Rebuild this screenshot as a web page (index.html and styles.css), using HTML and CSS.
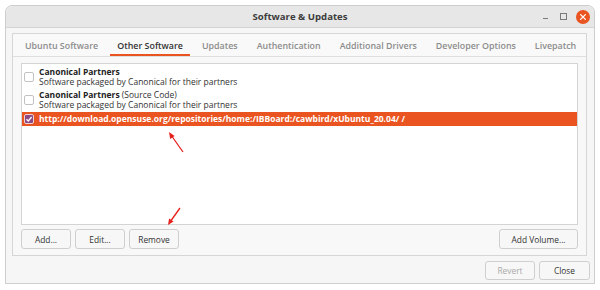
FILE: index.html
```html
<!DOCTYPE html>
<html>
<head>
<meta charset="utf-8">
<link rel="stylesheet" href="styles.css">
</head>
<body>
<div class="window">
  <div class="titlebar">
    <span></span>
    <span class="title">Software &amp; Updates</span>
    <div class="controls">
      <span class="ctl-min"></span>
      <span class="ctl-max"></span>
      <span class="ctl-close">
        <svg width="14" height="14" viewBox="0 0 14 14"><circle cx="7" cy="7" r="7" fill="#e95420"/><path d="M4.6 4.6 L9.4 9.4 M9.4 4.6 L4.6 9.4" stroke="#fff" stroke-width="1.3" stroke-linecap="round"/></svg>
      </span>
    </div>
  </div>
  <div class="body">
    <div class="notebook">
      <div class="tabs">
        <span class="tab">Ubuntu Software</span>
        <span class="tab active">Other Software</span>
        <span class="tab">Updates</span>
        <span class="tab">Authentication</span>
        <span class="tab">Additional Drivers</span>
        <span class="tab">Developer Options</span>
        <span class="tab">Livepatch</span>
      </div>
      <div class="page">
        <div class="list">
          <div class="row">
            <span class="check"></span>
            <div class="row-text">
              <div class="name"><b>Canonical Partners</b></div>
              <div class="desc">Software packaged by Canonical for their partners</div>
            </div>
          </div>
          <div class="row">
            <span class="check"></span>
            <div class="row-text">
              <div class="name"><b>Canonical Partners</b> (Source Code)</div>
              <div class="desc">Software packaged by Canonical for their partners</div>
            </div>
          </div>
          <div class="row selected">
            <span class="check checked">
              <svg width="8" height="8" viewBox="0 0 8 8"><path d="M1.5 4.2 L3.3 6 L6.6 2" fill="none" stroke="#fff" stroke-width="1.3"/></svg>
            </span>
            <div class="row-text">
              <div class="name"><b>http://download.opensuse.org/repositories/home:/IBBoard:/cawbird/xUbuntu_20.04/ /</b></div>
            </div>
          </div>
        </div>
        <div class="actions">
          <button class="btn w-add">Add...</button>
          <button class="btn w-edit">Edit...</button>
          <button class="btn w-remove">Remove</button>
          <span class="spacer"></span>
          <button class="btn w-vol">Add Volume...</button>
        </div>
      </div>
    </div>
    <div class="footer">
      <button class="btn disabled w-revert">Revert</button>
      <button class="btn w-close">Close</button>
    </div>
  </div>
</div>
<svg class="arrows" width="600" height="290" viewBox="0 0 600 290">
  <g stroke="#e5201c" stroke-width="1.3" fill="#e5201c">
    <line x1="183" y1="152" x2="171" y2="135"/>
    <path d="M169 132 L170.2 139 L174.6 135.9 Z" stroke="none"/>
    <line x1="180" y1="208" x2="170" y2="222"/>
    <path d="M168 225 L169.1 218.4 L173.5 221.6 Z" stroke="none"/>
  </g>
</svg>
</body>
</html>
```
FILE: styles.css
```css
* { box-sizing: border-box; }
html, body { margin: 0; padding: 0; background: #ffffff; }
body {
  width: 600px;
  height: 290px;
  position: relative;
  font-family: "Open Sans", "Noto Sans", sans-serif;
  color: #333;
  overflow: hidden;
}
.window {
  margin: 5px 0 0 5px;
  width: 590px;
  height: 279px;
  border: 1px solid #cdcdcd;
  border-radius: 7px 7px 0 0;
  background: #f6f6f6;
  display: flex;
  flex-direction: column;
  overflow: hidden;
}
.titlebar {
  height: 22px;
  flex: none;
  background: #e7e7e7;
  border-bottom: 1px solid #d4d4d4;
  display: grid;
  grid-template-columns: 1fr auto 1fr;
  align-items: center;
}
.title {
  font-size: 9.6px;
  font-weight: 700;
  color: #3c3c3c;
}
.controls {
  justify-self: end;
  display: flex;
  align-items: center;
  gap: 0;
  padding-right: 4px;
}
.ctl-min {
  width: 5px;
  height: 1px;
  background: #7a7a7a;
  margin-top: 4px;
  margin-right: 12px;
}
.ctl-max {
  width: 7px;
  height: 7px;
  border: 1px solid #7a7a7a;
  margin-right: 9px;
}
.ctl-close { display: flex; width: 14px; height: 14px; }
.body {
  flex: 1;
  display: flex;
  flex-direction: column;
  padding: 5px 4px 0 6px;
}
.notebook {
  height: 223px;
  margin-right: 3px;
  border: 1px solid #d6d6d6;
  background: #f8f8f8;
  display: flex;
  flex-direction: column;
}
.tabs {
  height: 23px;
  flex: none;
  display: flex;
  align-items: stretch;
  padding-left: 5px;
  gap: 5px;
  border-bottom: 1px solid #dedede;
  background: #f9f9f9;
}
.tab {
  display: flex;
  align-items: center;
  padding: 1px 7px 0;
  font-size: 8.9px;
  font-weight: 600;
  color: #8c8c8c;
  white-space: nowrap;
}
.tab.active {
  color: #333;
  box-shadow: inset 0 -2px 0 #e95420;
}
.page {
  flex: 1;
  display: flex;
  flex-direction: column;
  gap: 4px;
  padding: 6px 8px 6px 8px;
}
.list {
  flex: 1;
  background: #fff;
  border: 1px solid #d4d4d4;
  display: flex;
  flex-direction: column;
  padding-top: 1px;
}
.row {
  display: flex;
  align-items: center;
  gap: 5px;
  padding: 2px 0 1px 2px;
  font-size: 8.5px;
  line-height: 10px;
  color: #333;
}
.row b { color: #222; font-weight: 700; }
.row.selected {
  background: #e95420;
  color: #fff;
  padding: 2px 0 2px 2px;
  margin-top: 1px;
}
.row.selected b { color: #fff; }
.check {
  width: 10px;
  height: 10px;
  flex: none;
  border: 1px solid #c2c2c2;
  border-radius: 2px;
  background: #fff;
  display: flex;
  align-items: center;
  justify-content: center;
}
.check.checked {
  background: #8b4a86;
  border-color: #f0d0d0;
}
.actions {
  height: 20px;
  flex: none;
  display: flex;
  gap: 4px;
}
.spacer { flex: 1; }
.btn {
  font-family: inherit;
  font-size: 8.4px;
  color: #333;
  background: #f7f7f7;
  border: 1px solid #cfcfcf;
  border-radius: 3px;
  padding: 0;
  height: 20px;
}
.btn.disabled { color: #a9a9a9; }
.w-add { width: 50px; }
.w-edit { width: 50px; }
.w-remove { width: 50px; }
.w-vol { width: 79px; }
.footer {
  margin-top: 5px;
  display: flex;
  justify-content: flex-end;
  gap: 4px;
}
.footer .btn { height: 19px; }
.w-revert { width: 50px; }
.w-close { width: 51px; }
.arrows {
  position: absolute;
  left: 0;
  top: 0;
  pointer-events: none;
}
```
